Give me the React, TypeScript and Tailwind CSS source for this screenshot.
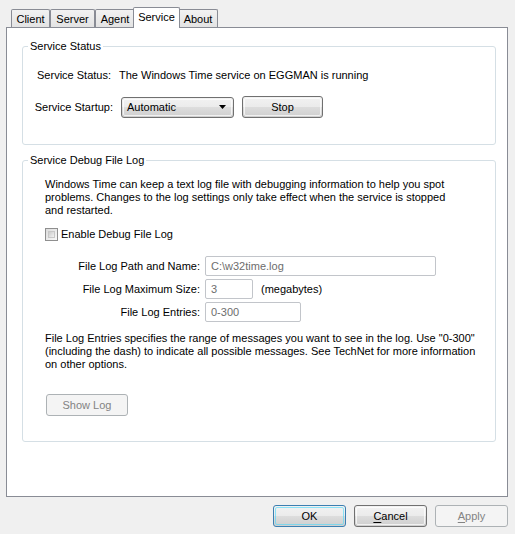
const font = { fontFamily: '"Liberation Sans", Arial, sans-serif' };

function Tab({ label, width, active }: { label: string; width: string; active?: boolean }) {
  if (active) {
    return (
      <div
        className={`${width} relative z-10 -mx-[2px] -mb-px flex h-[21px] items-start justify-center rounded-t-[2px] border border-b-0 border-[#898c95] bg-white pt-[3px]`}
      >
        {label}
      </div>
    );
  }
  return (
    <div
      className={`${width} flex h-[18px] items-center justify-center rounded-t-[2px] border border-b-0 border-[#898c95] bg-gradient-to-b from-[#f2f2f2] to-[#e3e3e3] pt-[1px]`}
    >
      {label}
    </div>
  );
}

function Button({
  label,
  width,
  disabled,
  focused,
  accessKey,
}: {
  label: string;
  width: string;
  disabled?: boolean;
  focused?: boolean;
  accessKey?: boolean;
}) {
  const body = accessKey ? (
    <>
      <span className="underline underline-offset-2">{label[0]}</span>
      {label.slice(1)}
    </>
  ) : (
    label
  );
  if (disabled) {
    return (
      <div
        className={`${width} flex h-[22px] items-center justify-center rounded-[3px] border border-[#adb2b5] bg-[#f4f4f4] text-[#838383]`}
      >
        {body}
      </div>
    );
  }
  return (
    <div
      className={`${width} h-[22px] rounded-[3px] border ${
        focused ? "border-[#3c7fb1]" : "border-[#707070]"
      } bg-[linear-gradient(#f2f2f2_0%,#ebebeb_50%,#dddddd_50%,#cfcfcf_100%)] p-px`}
    >
      <div
        className={`flex h-full items-center justify-center rounded-[2px] border ${
          focused ? "border-[#48d8fb]/60" : "border-white/70"
        }`}
      >
        {body}
      </div>
    </div>
  );
}

function Field({ value, width }: { value: string; width: string }) {
  return (
    <div
      className={`${width} flex h-[20px] items-center rounded-[2px] border border-[#c2c5ca] bg-white px-[5px] text-[#6d6d6d]`}
    >
      {value}
    </div>
  );
}

export default function App() {
  return (
    <div
      style={font}
      className="flex h-[534px] w-[515px] flex-col bg-[#f0f0f0] px-[6px] pt-[7px] text-[11px] leading-[13px] text-black"
    >
      {/* tabs */}
      <div className="flex h-[20px] items-end pl-[5px]">
        <Tab label="Client" width="w-[39px]" />
        <Tab label="Server" width="w-[45px]" />
        <Tab label="Agent" width="w-[40px]" />
        <Tab label="Service" width="w-[47px]" active />
        <Tab label="About" width="w-[40px]" />
      </div>

      {/* tab page */}
      <div className="flex h-[470px] w-[502px] flex-col border border-[#898c95] bg-white pl-[15px] pr-[11px] pt-[12px]">
        <fieldset className="h-[105px] rounded-[3px] border border-[#d5dfe5] px-0">
          <legend className="ml-[5px] px-[2px]">Service Status</legend>
          <div className="mt-[16px] flex items-center">
            <span className="w-[88px] text-right">Service Status:</span>
            <span className="ml-[8px]">
              The Windows Time service on EGGMAN is running
            </span>
          </div>
          <div className="mt-[14px] flex items-center">
            <span className="w-[90px] text-right">Service Startup:</span>
            <div className="ml-[8px] h-[21px] w-[113px] rounded-[3px] border border-[#707070] bg-[linear-gradient(#f2f2f2_0%,#ebebeb_50%,#dddddd_50%,#cfcfcf_100%)] p-px">
              <div className="flex h-full items-center justify-between rounded-[2px] border border-white/70 pl-[3px] pr-[5px]">
                <span>Automatic</span>
                <svg width="7" height="4" viewBox="0 0 7 4">
                  <path d="M0 0h7L3.5 4z" fill="#000" />
                </svg>
              </div>
            </div>
            <div className="ml-[8px]">
              <Button label="Stop" width="w-[81px]" />
            </div>
          </div>
        </fieldset>

        <fieldset className="mt-[9px] h-[288px] rounded-[3px] border border-[#d5dfe5] px-0">
          <legend className="ml-[5px] px-[2px]">Service Debug File Log</legend>
          <div className="ml-[22px] mt-[11px] whitespace-nowrap">
            <div>
              Windows Time can keep a text log file with debugging information
              to help you spot
            </div>
            <div>
              problems. Changes to the log settings only take effect when the
              service is stopped
            </div>
            <div>and restarted.</div>
          </div>

          <label className="ml-[22px] mt-[11px] flex items-center gap-[3px]">
            <span className="h-[13px] w-[13px] border border-[#8f8f8f] bg-[linear-gradient(135deg,#dcdcdc,#f9f9f9)] p-[2px]">
              <span className="block h-full w-full border border-[#c8c8c8] bg-[linear-gradient(135deg,#cbcbcb,#f3f3f3)]" />
            </span>
            <span>Enable Debug File Log</span>
          </label>

          <div className="mt-[15px] flex flex-col gap-[3px]">
            <div className="flex items-center">
              <span className="w-[177px] text-right">
                File Log Path and Name:
              </span>
              <div className="ml-[5px]">
                <Field value="C:\w32time.log" width="w-[231px]" />
              </div>
            </div>
            <div className="flex items-center">
              <span className="w-[177px] text-right">
                File Log Maximum Size:
              </span>
              <div className="ml-[5px]">
                <Field value="3" width="w-[48px]" />
              </div>
              <span className="ml-[8px]">(megabytes)</span>
            </div>
            <div className="flex items-center">
              <span className="w-[177px] text-right">File Log Entries:</span>
              <div className="ml-[5px]">
                <Field value="0-300" width="w-[96px]" />
              </div>
            </div>
          </div>

          <div className="ml-[22px] mt-[10px] whitespace-nowrap">
            <div>
              File Log Entries specifies the range of messages you want to see
              in the log. Use "0-300"
            </div>
            <div>
              (including the dash) to indicate all possible messages. See
              TechNet for more information
            </div>
            <div>on other options.</div>
          </div>

          <div className="ml-[23px] mt-[23px]">
            <Button label="Show Log" width="w-[82px]" disabled />
          </div>
        </fieldset>
      </div>

      {/* dialog buttons */}
      <div className="mt-[8px] flex justify-end gap-[8px] pr-[1px]">
        <Button label="OK" width="w-[73px]" focused />
        <Button label="Cancel" width="w-[73px]" accessKey />
        <Button label="Apply" width="w-[73px]" disabled accessKey />
      </div>
    </div>
  );
}
